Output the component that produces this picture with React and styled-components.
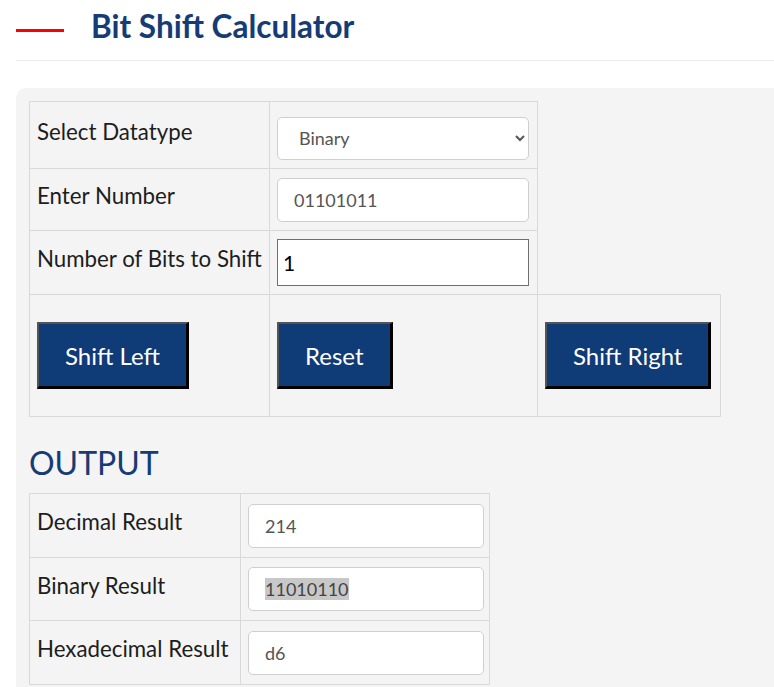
import React, { useEffect, useRef, useState } from 'react';
import styled, { createGlobalStyle } from 'styled-components';

const GlobalStyle = createGlobalStyle`
    body {
        margin: 0;
        background: #fff;
        font-family: Lato, "Liberation Sans", sans-serif;
    }
`;

const Page = styled.div`
    padding-left: 16px;
`;

const Header = styled.header`
    display: flex;
    align-items: flex-start;
    padding-top: 7px;
    height: 53px;
    border-bottom: 1px solid #ebebeb;
`;

const RedBar = styled.span`
    width: 48px;
    height: 3px;
    margin-top: 22px;
    background: #ff0000;
`;

const Title = styled.h1`
    margin: 0 0 0 27px;
    font-size: 31.5px;
    font-weight: 700;
    line-height: 38px;
    color: #163c75;
`;

const Panel = styled.section`
    margin-top: 27px;
    background: #f4f4f4;
    border-top-left-radius: 10px;
    padding: 13px 0 4px 13px;
`;

const Grid = styled.table`
    border-collapse: collapse;
    table-layout: fixed;
`;

const Row = styled.tr`
    height: ${p => p.$h}px;
`;

const Cell = styled.td`
    width: ${p => p.$w}px;
    border: 1px solid #d9d9d9;
    padding: 0 7px;
    vertical-align: middle;
    box-sizing: border-box;
`;

const ResultCell = styled(Cell)`
    padding-right: 5px;
`;

const Label = styled(Cell)`
    padding-right: 0;
    padding-bottom: 8px;
    font-size: 22.3px;
    color: #1d1d1d;
    white-space: nowrap;
`;

const Field = styled.input`
    box-sizing: border-box;
    width: ${p => p.$w}px;
    height: 44px;
    padding: 0 0 0 16px;
    border: 1px solid #cfcfcf;
    border-radius: 5px;
    background: #fff;
    font-family: inherit;
    font-size: 18px;
    color: #555;
    outline: none;
    display: block;
    &::selection {
        background: #c8c8c8;
        color: #444;
    }
`;

const Picker = styled.select`
    box-sizing: border-box;
    display: block;
    width: 252px;
    height: 43px;
    margin-top: 6px;
    padding: 0 10px 0 17px;
    border: 1px solid #cfcfcf;
    border-radius: 5px;
    background: #fff;
    font-family: inherit;
    font-size: 18px;
    color: #555;
    outline: none;
`;

const ShiftInput = styled.input`
    box-sizing: border-box;
    display: block;
    width: 252px;
    height: 47px;
    padding: 0 0 0 5px;
    border: 1.5px solid #6f6f6f;
    border-radius: 0;
    background: #fff;
    font-family: inherit;
    font-size: 21px;
    color: #000;
    outline: none;
`;

const ActionButton = styled.button`
    margin: 19px 0;
    padding: 0 26px;
    height: 67px;
    background: #0f3b77;
    color: #fff;
    font-family: inherit;
    font-size: 24px;
    border-style: solid;
    border-width: 2px 3px 3px 2px;
    border-color: #545454 #000 #000 #545454;
    cursor: pointer;
`;

const Heading = styled.h2`
    margin: 27px 0 11px 0;
    font-size: 32px;
    font-weight: 400;
    line-height: 38px;
    color: #163c75;
`;

const outputs = [
    { label: 'Decimal Result', value: '214', h: 64 },
    { label: 'Binary Result', value: '11010110', h: 63, selected: true },
    { label: 'Hexadecimal Result', value: 'd6', h: 64 },
];

const ResultField = ({ value, selected }) => {
    const ref = useRef(null);

    useEffect(() => {
        if (selected && ref.current) {
            ref.current.focus();
            ref.current.setSelectionRange(0, value.length);
        }
    }, [selected, value]);

    return <Field ref={ref} $w={236} defaultValue={value} readOnly />;
};

const App = () => {
    const [bits, setBits] = useState('1');

    return (
        <Page>
            <GlobalStyle />
            <Header>
                <RedBar />
                <Title>Bit Shift Calculator</Title>
            </Header>
            <Panel>
                <Grid>
                    <tbody>
                        <Row $h={67}>
                            <Label $w={240}>Select Datatype</Label>
                            <Cell $w={268}>
                                <Picker defaultValue="binary">
                                    <option value="binary">Binary</option>
                                    <option value="decimal">Decimal</option>
                                    <option value="hex">Hexadecimal</option>
                                </Picker>
                            </Cell>
                        </Row>
                        <Row $h={62}>
                            <Label>Enter Number</Label>
                            <Cell>
                                <Field $w={252} defaultValue="01101011" />
                            </Cell>
                        </Row>
                        <Row $h={64}>
                            <Label>Number of Bits to Shift</Label>
                            <Cell>
                                <ShiftInput value={bits} onChange={e => setBits(e.target.value)} />
                            </Cell>
                        </Row>
                        <Row $h={122}>
                            <Cell><ActionButton>Shift Left</ActionButton></Cell>
                            <Cell><ActionButton>Reset</ActionButton></Cell>
                            <Cell $w={183}><ActionButton>Shift Right</ActionButton></Cell>
                        </Row>
                    </tbody>
                </Grid>
                <Heading>OUTPUT</Heading>
                <Grid>
                    <tbody>
                        {outputs.map((o, i) => (
                            <Row key={o.label} $h={o.h}>
                                <Label $w={i === 0 ? 211 : undefined}>{o.label}</Label>
                                <ResultCell $w={i === 0 ? 249 : undefined}>
                                    <ResultField value={o.value} selected={o.selected} />
                                </ResultCell>
                            </Row>
                        ))}
                    </tbody>
                </Grid>
            </Panel>
        </Page>
    );
};

export default App;
